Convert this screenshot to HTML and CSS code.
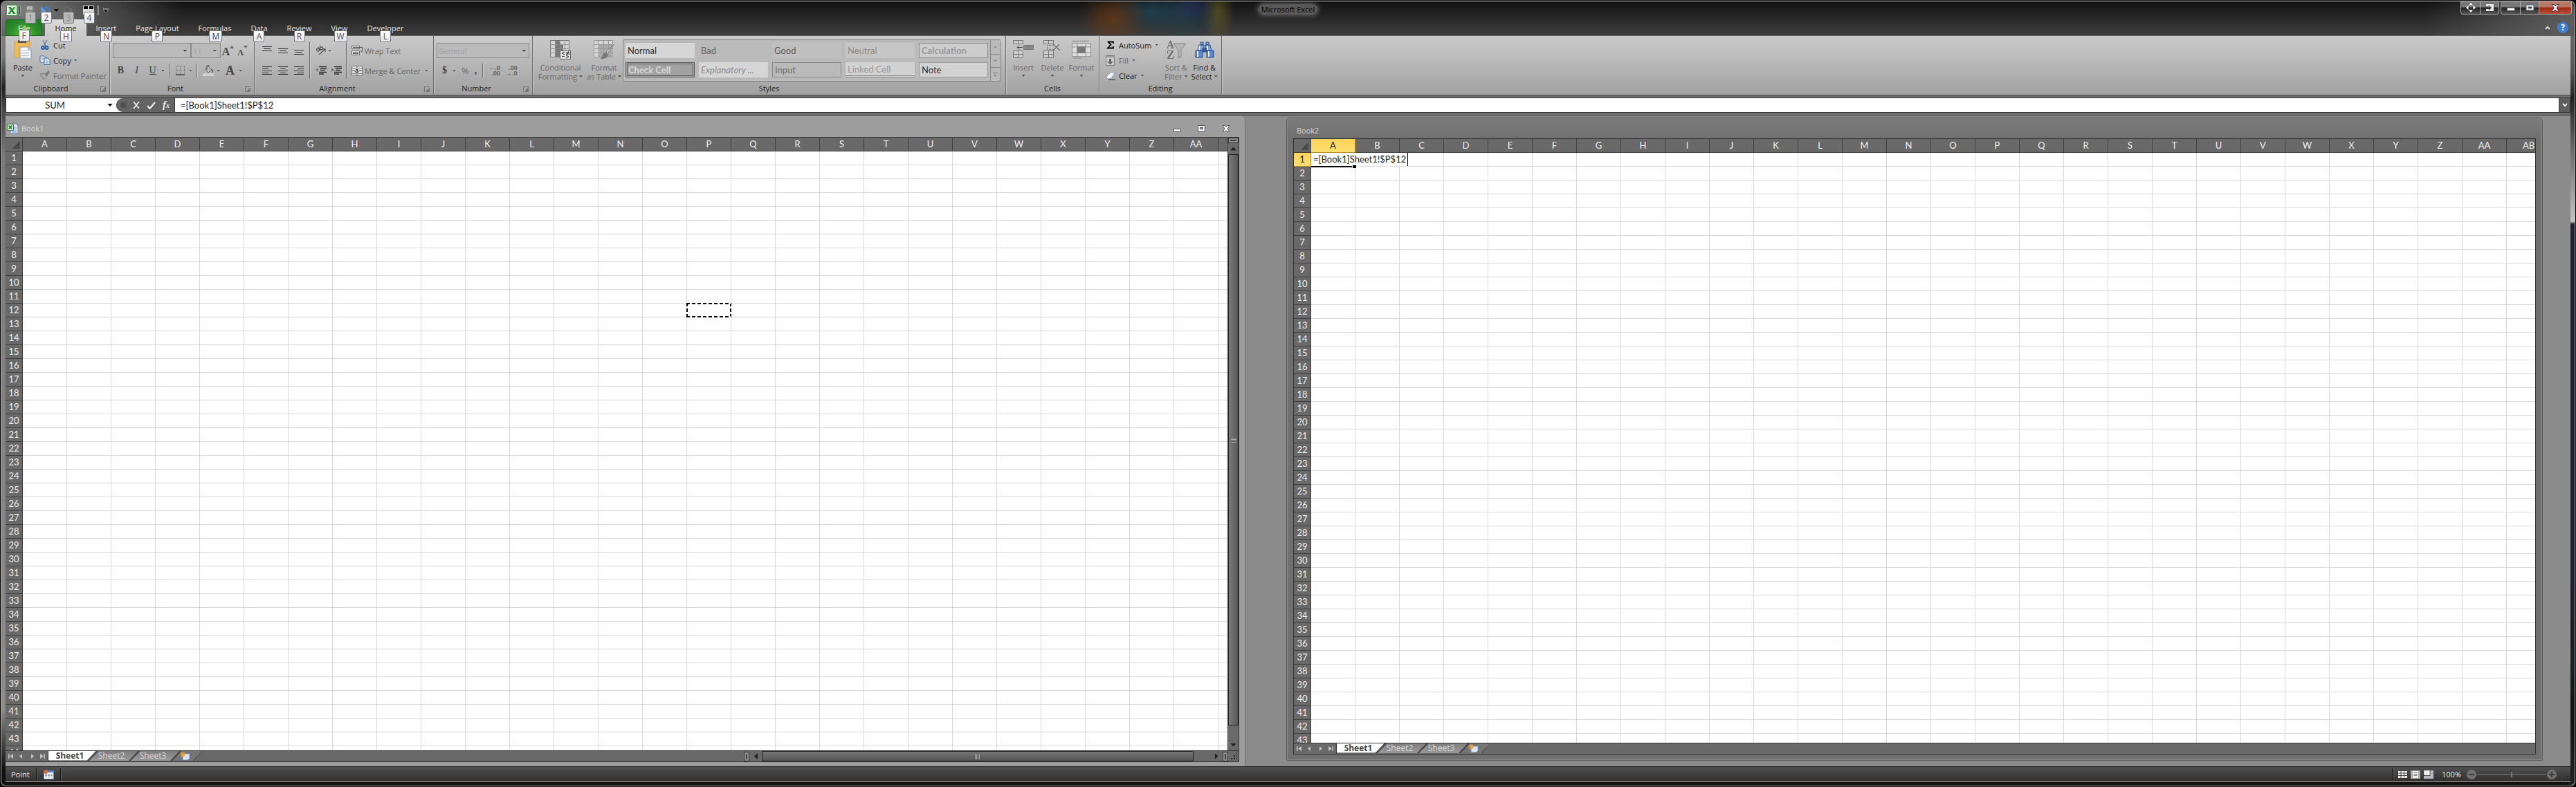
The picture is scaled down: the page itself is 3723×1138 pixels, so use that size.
FILE: index.html
```html
<!DOCTYPE html>
<html lang="en">
<head>
  <meta charset="UTF-8" />
  <meta name="viewport" content="width=device-width, initial-scale=1.0" />
  <title>Microsoft Excel</title>
  <link rel="stylesheet" href="styles.css">
</head>
<body>
  <header class="titlebar">
    <div class="title-row">
      <div class="quick-access">
        <svg class="app-icon" width="16" height="16" viewBox="0 0 16 16"><rect x=".5" y=".5" width="15" height="15" rx="1" fill="#fff" stroke="#3c9a3c"/><rect x="2" y="2" width="12" height="12" fill="#dff0d8"/><path d="M3 3h3.500l2 3.300L11 3h2.500L9.700 8l4 5H10L7.800 9.700 5.500 13H2.500l4-5z" fill="#1f8a2c"/></svg>
        <span class="qat-sep"></span>
        <button class="qat" disabled aria-label="Save"><svg width="14" height="14" viewBox="0 0 14 14"><path d="M1 1h12v12H1z" fill="#808080"/><path d="M3 1h8v5H3z" fill="#b5b5b5"/><path d="M3 8h8v5H3z" fill="#9c9c9c"/></svg><kbd class="off">1</kbd></button>
        <button class="qat" aria-label="Undo"><svg width="14" height="14" viewBox="0 0 14 14"><path d="M3 5c4-4 9-2 9 2 0 3-2 5-4 6" fill="none" stroke="#3d7fd0" stroke-width="2.500"/><path d="M0 1v8h8z" fill="#5b9be6"/></svg><kbd>2</kbd></button>
        <span class="caret black"></span>
        <button class="qat" disabled aria-label="Redo"><svg width="14" height="14" viewBox="0 0 14 14"><path d="M10 6c-2-5-8-4-8 0 0 3 3 5 5 6" fill="none" stroke="#6a6a6a" stroke-width="2"/><path d="M13 3v6H7z" fill="#6a6a6a"/></svg><kbd class="off">3</kbd></button>
        <span class="caret"></span>
        <button class="qat" aria-label="Arrange windows"><svg width="16" height="14" viewBox="0 0 16 14"><path d="M0 0h16v13H0z" fill="#ddd"/><path d="M1 1h6v4H1zM9 1h6v4H9z" fill="#000"/></svg><kbd>4</kbd></button>
        <span class="qat-sep"></span>
        <button class="qat-more" aria-label="Customize Quick Access Toolbar"><svg width="8" height="8" viewBox="0 0 8 8"><path d="M0 0h8v1.500H0zM0 3h8L4 7.500z" fill="#111" stroke="#ccc" stroke-width=".6"/></svg></button>
      </div>
      <h1>Microsoft Excel</h1>
      <div class="window-controls">
        <div class="control-group">
          <button aria-label="Move"><svg width="14" height="14" viewBox="0 0 14 14"><path d="M7 0l3 3.500H4zM7 14l3-3.500H4zM0 7l3.500-3v6zM14 7l-3.500-3v6z" fill="#fff"/></svg></button>
          <button aria-label="Send to monitor"><svg width="12" height="10" viewBox="0 0 12 10"><path d="M1 0h11v10H1V7h4v2l4-4-4-4v2H1z" fill="#e8e8e8"/></svg></button>
        </div>
        <div class="control-group">
          <button aria-label="Minimize"><svg width="12" height="10" viewBox="0 0 12 10"><path d="M.5 5.500h11v4H.5z" fill="#fff" stroke="#555"/></svg></button>
          <button aria-label="Maximize"><svg width="13" height="10" viewBox="0 0 13 10"><path d="M1 1h11v8H1zM4 4v2h5V4z" fill="#f3f3f3" fill-rule="evenodd" stroke="#556"/></svg></button>
          <button class="close" aria-label="Close"><svg width="12" height="11" viewBox="0 0 12 11"><path d="M1 .5h3l2 2.500L8 .5h3l-3.200 5L11 10.500H8L6 8l-2 2.500H1l3.200-5z" fill="#fff" stroke="#534"/></svg></button>
        </div>
      </div>
    </div>
    <nav class="tabs">
      <button class="file">File<kbd>F</kbd></button>
      <button class="active">Home<kbd>H</kbd></button>
      <button>Insert<kbd>N</kbd></button>
      <button>Page Layout<kbd>P</kbd></button>
      <button>Formulas<kbd>M</kbd></button>
      <button>Data<kbd>A</kbd></button>
      <button>Review<kbd>R</kbd></button>
      <button>View<kbd>W</kbd></button>
      <button>Developer<kbd>L</kbd></button>
      <div class="help">
        <button aria-label="Minimize the Ribbon"><svg width="8" height="6" viewBox="0 0 8 6"><path d="M1 5l3-3 3 3" fill="none" stroke="#ddd" stroke-width="2"/></svg></button>
        <button class="help-button" aria-label="Help">?</button>
      </div>
    </nav>
  </header>

  <section class="ribbon">
    <div class="group clipboard">
      <div class="group-body">
        <button class="large paste">
          <svg width="26" height="28" viewBox="0 0 26 28"><rect x="1" y="2" width="22" height="23" rx="1" fill="#eebb58" stroke="#d9a03c"/><path d="M6 0h12v4H6z" fill="#555"/><path d="M8 0h8v2H8z" fill="#ddd"/><path d="M9 10h12l4 4v13H9z" fill="#fafcff" stroke="#7d93b3"/><path d="M21 10v4h4" fill="#dbe6f3" stroke="#7d93b3"/><path d="M11 15h9M11 17.500h11M11 20h11M11 22.500h11M11 25h11" stroke="#b4c2d6"/></svg>
          <span>Paste</span><i class="caret"></i>
        </button>
        <div class="stack">
          <button class="small"><svg width="16" height="14" viewBox="0 0 16 14"><path d="M5 0l4.500 9M11 0L6.500 9" stroke="#6c7f96" stroke-width="1.500"/><g fill="none" stroke="#2462b0" stroke-width="2"><circle cx="5" cy="11" r="2"/><circle cx="10.500" cy="11" r="2"/></g></svg>Cut</button>
          <button class="small"><svg width="16" height="14" viewBox="0 0 16 14"><path d="M1 1h6l2 2v7H1z" fill="#eef4fc" stroke="#3f6fae"/><path d="M2.500 4h4M2.500 6h4" stroke="#5d8ed0"/><path d="M7 4h5l3 3v6.500H7z" fill="#fff" stroke="#2e60a8"/><path d="M8.500 7h3M8.500 9h5M8.500 11h5" stroke="#4f84cb"/></svg>Copy<i class="caret"></i></button>
          <button class="small" disabled><svg width="16" height="14" viewBox="0 0 16 14"><path d="M1 5l6-1 4 4-5 5z" fill="#aaa" stroke="#777"/><path d="M8 5l5-5 2 2-4 6z" fill="#777"/></svg>Format Painter</button>
        </div>
      </div>
      <div class="group-label"><span>Clipboard</span><i class="launcher"></i></div>
    </div>

    <div class="group font">
      <div class="group-body rows">
        <div class="row">
          <select class="font-name" disabled aria-label="Font"><option></option></select><select class="font-size" disabled aria-label="Font size"><option>11</option></select>
          <button class="tool letter grow" disabled aria-label="Grow Font">A<svg width="6" height="4" viewBox="0 0 6 4"><path d="M0 4h6L3 0z" fill="#666"/></svg></button>
          <button class="tool letter shrink" disabled aria-label="Shrink Font">A<svg width="6" height="4" viewBox="0 0 6 4"><path d="M0 0h6L3 4z" fill="#666"/></svg></button>
        </div>
        <div class="row">
          <button class="tool letter" disabled><b>B</b></button>
          <button class="tool letter" disabled><i>I</i></button>
          <button class="tool letter" disabled><u>U</u></button>
          <i class="caret"></i><span class="sep"></span>
          <button class="tool" disabled aria-label="Borders"><svg width="15" height="14" viewBox="0 0 15 14"><path d="M1 .5h13M1 6.500h13M1.500 1v12M7.500 1v12M13.500 1v12" stroke="#777" stroke-dasharray="1 1"/><path d="M1 13h13" stroke="#444" stroke-width="1.500"/></svg></button>
          <i class="caret"></i><span class="sep"></span>
          <button class="tool" disabled aria-label="Fill Color"><svg width="16" height="16" viewBox="0 0 16 16"><path d="M3 6l5-4 5 5-5 4z" fill="#bbb" stroke="#666"/><path d="M6 7V2a1.500 1.500 0 013 0M13 6c2 2 2 3 1 5" fill="none" stroke="#666" stroke-width="1.400"/><path d="M0 12h16v4H0z" fill="#d0d0d0"/></svg></button>
          <i class="caret"></i>
          <button class="tool letter big" disabled>A</button>
          <i class="caret"></i>
        </div>
      </div>
      <div class="group-label"><span>Font</span><i class="launcher"></i></div>
    </div>

    <div class="group alignment">
      <div class="group-body">
        <div class="align-grid">
          <button class="tool" aria-label="Top Align"><svg width="14" height="12" viewBox="0 0 14 12"><path d="M0 .5h14M2 3.500h10M0 6.500h14" stroke="#333"/></svg></button>
          <button class="tool" aria-label="Middle Align"><svg width="14" height="12" viewBox="0 0 14 12"><path d="M0 3.500h14M2 6.500h10M0 9.500h14" stroke="#333"/></svg></button>
          <button class="tool" aria-label="Bottom Align"><svg width="14" height="12" viewBox="0 0 14 12"><path d="M0 5.500h14M2 8.500h10M0 11.500h14" stroke="#333"/></svg></button>
          <button class="tool" aria-label="Align Left"><svg width="14" height="12" viewBox="0 0 14 12"><path d="M0 .5h14M0 3.500h9M0 6.500h14M0 9.500h9M0 11.500h14" stroke="#333"/></svg></button>
          <button class="tool" aria-label="Center"><svg width="14" height="12" viewBox="0 0 14 12"><path d="M0 .5h14M3 3.500h8M0 6.500h14M3 9.500h8M0 11.500h14" stroke="#333"/></svg></button>
          <button class="tool" aria-label="Align Right"><svg width="14" height="12" viewBox="0 0 14 12"><path d="M0 .5h14M5 3.500h9M0 6.500h14M5 9.500h9M0 11.500h14" stroke="#333"/></svg></button>
        </div>
        <span class="sep tall"></span>
        <div class="indent">
          <div class="row"><button class="tool" disabled aria-label="Orientation"><svg width="16" height="14" viewBox="0 0 16 14"><g fill="none" stroke="#555" stroke-width="1.300"><circle cx="3.500" cy="6" r="2"/><path d="M4 2l3 5"/><circle cx="8.500" cy="4" r="2"/><path d="M6 0l1.500 3M5 13l9-8M14 9V5h-4"/></g></svg></button><i class="caret"></i></div>
          <div class="row"><button class="tool" aria-label="Decrease Indent"><svg width="16" height="14" viewBox="0 0 16 14"><path d="M5 1.500h11M7 4h9M7 6.500h7M5 9.500h11M5 12h7" stroke="#333" stroke-width="1.500"/><path d="M0 6l4-3v6z" fill="#777"/></svg></button><button class="tool" aria-label="Increase Indent"><svg width="16" height="14" viewBox="0 0 16 14"><path d="M5 1.500h11M7 4h9M7 6.500h7M5 9.500h11M5 12h7" stroke="#333" stroke-width="1.500"/><path d="M5 6L1 3v6z" fill="#777"/></svg></button></div>
        </div>
        <span class="sep tall"></span>
        <div class="wraps">
          <button class="small" disabled><svg width="16" height="14" viewBox="0 0 16 14"><path d="M.5.500h11v4H.5zM.5 7.500h11v6H.5z" fill="#ddd" stroke="#666"/><path d="M2 2.500h13.500V8M2 9.500h8M2 11.500h8M13 7l2.500 2.500L17 7" fill="none" stroke="#555"/></svg>Wrap Text</button>
          <button class="small" disabled><svg width="16" height="15" viewBox="0 0 16 15"><path d="M.5.500h15v14H.5zM.5 3.500h15M.5 11.500h15M8 .5v3M8 11.500v3" fill="#ddd" stroke="#777"/><path d="M1 7.500h4M11 7.500h4" stroke="#444"/><text x="5" y="10" font-size="9" font-weight="bold" fill="#333">a</text></svg>Merge &amp; Center<i class="caret"></i></button>
        </div>
      </div>
      <div class="group-label"><span>Alignment</span><i class="launcher"></i></div>
    </div>

    <div class="group number">
      <div class="group-body rows">
        <div class="row"><select class="number-format" disabled aria-label="Number format"><option>General</option></select></div>
        <div class="row">
          <button class="tool letter" disabled><b>$</b></button><i class="caret"></i>
          <button class="tool percent" disabled>%</button>
          <button class="tool letter" disabled><b>,</b></button>
          <span class="sep"></span>
          <button class="tool decimal" disabled aria-label="Increase Decimal"><span>←.0</span><span>.00</span></button>
          <button class="tool decimal" disabled aria-label="Decrease Decimal"><span>.00</span><span>→.0</span></button>
        </div>
      </div>
      <div class="group-label"><span>Number</span><i class="launcher"></i></div>
    </div>

    <div class="group styles">
      <div class="group-body">
        <button class="large" disabled>
          <svg width="30" height="28" viewBox="0 0 30 28"><path d="M.5.500h27v24H.5z" fill="#d4d4d4" stroke="#777"/><path d="M7 0h7v24H7zM14 6h5v12h-5z" fill="#777"/><path d="M0 6.500h28M0 12.500h28M0 18.500h28M7.500 0v24M14.500 0v24M21.500 0v24" stroke="#8f8f8f"/><path d="M14.500 15.500h15v12h-15z" fill="#e2e2e2" stroke="#666"/><path d="M21 17l-4 2 4 2M17 23.500h4M23 18h5M23 20h5M27 16l-3 6M23 22l4 2-4 2" fill="none" stroke="#333"/></svg>
          <span>Conditional</span><span>Formatting<i class="caret"></i></span>
        </button>
        <button class="large" disabled>
          <svg width="30" height="28" viewBox="0 0 30 28"><path d="M.5.500h27v24H.5z" fill="#d4d4d4" stroke="#999"/><path d="M7 6h21v18H7z" fill="#aaa"/><path d="M0 6.500h28M0 12.500h28M0 18.500h28M7.500 0v24M14.500 0v24M21.500 0v24" stroke="#999"/><path d="M29 6l-9 13-2-2z" fill="#ddd" stroke="#777"/><path d="M9 27c4-1 3-7 8-9l4 3c-1 5-7 7-12 6z" fill="#777"/></svg>
          <span>Format</span><span>as Table<i class="caret"></i></span>
        </button>
        <div class="gallery">
          <div class="gallery-cells">
            <button class="s-normal">Normal</button>
            <button class="s-bad">Bad</button>
            <button class="s-good">Good</button>
            <button class="s-neutral">Neutral</button>
            <button class="s-calc">Calculation</button>
            <button class="s-check">Check Cell</button>
            <button class="s-expl">Explanatory ...</button>
            <button class="s-input">Input</button>
            <button class="s-linked">Linked Cell</button>
            <button class="s-note">Note</button>
          </div>
          <div class="gallery-scroll">
            <button disabled aria-label="Scroll up"><i class="caret up"></i></button>
            <button disabled aria-label="Scroll down"><i class="caret"></i></button>
            <button class="more" disabled aria-label="More"><i class="caret"></i></button>
          </div>
        </div>
      </div>
      <div class="group-label"><span>Styles</span></div>
    </div>

    <div class="group cells">
      <div class="group-body">
        <button class="large" disabled>
          <svg width="31" height="28" viewBox="0 0 31 28"><g fill="#ccc" stroke="#777"><path d="M.5.500h14v5H.5zM7.500.500v5M.5 15.500h14v10H.5zM.5 20.500h14M7.500 15.500v10"/><path d="M15.500 7.500h14v6h-14z" fill="#888"/><path d="M22.500 7.500v6"/><path d="M14 10.500H6M9 7.500l-3 3 3 3" fill="none" stroke="#444"/></g></svg>
          <span>Insert</span><i class="caret"></i>
        </button>
        <button class="large" disabled>
          <svg width="26" height="28" viewBox="0 0 26 28"><path d="M.5.500h14v5H.5zM7.500.500v5M.5 15.500h14v10H.5zM.5 20.500h14M7.500 15.500v10" fill="#ccc" stroke="#777"/><path d="M6 7.500h10M6 13.500h10M5.500 8v5" stroke="#555" stroke-dasharray="1 1"/><path d="M14 6l10 9M23 6l-9 9" stroke="#777" stroke-width="1.500"/></svg>
          <span>Delete</span><i class="caret"></i>
        </button>
        <button class="large" disabled>
          <svg width="31" height="30" viewBox="0 0 31 30"><path d="M.5 5.500h29v20H.5zM8.500 5v20M21.500 5v20M1 10.500h29M1 19.500h29" fill="#ddd" stroke="#888"/><path d="M8 10h13v10H8z" fill="#777"/><path d="M1 1.500h25" stroke="#555" stroke-dasharray="2 1"/><path d="M2 26h12v2H2z" fill="#ccc" stroke="#888"/></svg>
          <span>Format</span><i class="caret"></i>
        </button>
      </div>
      <div class="group-label"><span>Cells</span></div>
    </div>

    <div class="group editing">
      <div class="group-body">
        <div class="stack">
          <button class="small"><svg width="14" height="12" viewBox="0 0 14 12"><path d="M3 1.500h8V4M3 1l4.500 4.500L3 10.500h8V8" fill="none" stroke="#000" stroke-width="1.800"/></svg>AutoSum<i class="caret"></i></button>
          <button class="small" disabled><svg width="14" height="15" viewBox="0 0 14 15"><path d="M.5.500h12v14H.5z" fill="#ccc" stroke="#777"/><path d="M1 1h12v2H1z" fill="#999"/><path d="M5 5h3v4h3l-4.500 4.500L2 9h3z" fill="#666"/></svg>Fill<i class="caret"></i></button>
          <button class="small"><svg width="14" height="14" viewBox="0 0 14 14"><path d="M1 9l7-7 5 2-6 8H2z" fill="#f5f8fc" stroke="#7f99bd"/><path d="M7 12l6-8v3l-5 6z" fill="#9db8dc"/><path d="M4 13.500h10" stroke="#222"/></svg>Clear<i class="caret"></i></button>
        </div>
        <button class="large" disabled>
          <svg width="30" height="28" viewBox="0 0 30 28"><g fill="none" stroke="#6d6d6d"><path d="M1 11.500h3M8 11.500h4M4 8h5" stroke-width="1"/><path d="M2.500 11L6 2" stroke-width="1"/><path d="M6 1l4 10" stroke-width="2.200"/><path d="M2.500 19v-3.500H10L2.500 26.500H11V23" stroke-width="1"/><path d="M10 16L3 26" stroke-width="2.200"/></g><path d="M11 5h18l-7 9v11h-4V14z" fill="#b5b5b5" stroke="#858585"/></svg>
          <span>Sort &amp;</span><span>Filter<i class="caret"></i></span>
        </button>
        <button class="large">
          <svg width="28" height="26" viewBox="0 0 28 26"><g fill="#7da2d8" stroke="#2b4d88"><path d="M8 2h4v4H8zM16 2h4v4h-4zM6 6h7v8H4zM15 6h7l2 8h-9z"/><path d="M1 14h10v10H1zM17 14h10v10H17z" fill="#5d89cc"/><path d="M11 11h6v5h-6z" fill="#345b9b"/></g><path d="M4 15v8M20 15v8M7 7l-1 6M18 7v6" stroke="#e6f0ff" stroke-width="2"/></svg>
          <span>Find &amp;</span><span>Select<i class="caret"></i></span>
        </button>
      </div>
      <div class="group-label"><span>Editing</span></div>
    </div>
  </section>

  <section class="formula-bar">
    <input class="name-box" value="SUM" aria-label="Name Box">
    <button class="name-drop" aria-label="Names"><i class="caret black"></i></button>
    <div class="formula-tools">
      <i class="knob"></i>
      <button aria-label="Cancel"><svg width="10" height="10" viewBox="0 0 10 10"><path d="M1 0l8 10M9 0L1 10" stroke="#eee" stroke-width="1.800"/></svg></button>
      <button aria-label="Enter"><svg width="13" height="11" viewBox="0 0 13 11"><path d="M1 6l3.500 4L12 1" fill="none" stroke="#eee" stroke-width="2.200"/></svg></button>
      <button class="fx" aria-label="Insert Function">f<small>x</small></button>
    </div>
    <input class="formula" value="=[Book1]Sheet1!$P$12" aria-label="Formula Bar">
    <button class="expand" aria-label="Expand Formula Bar"><svg width="8" height="6" viewBox="0 0 8 6"><path d="M1 1l3 3 3-3" fill="none" stroke="#eee" stroke-width="2"/></svg></button>
  </section>

  <main class="workspace">
    <section class="book book1">
      <div class="book-title">
        <svg width="16" height="16" viewBox="0 0 16 16"><path d="M5 1h8l3 3v11H5z" fill="#e4eefb" stroke="#4a78b8"/><path d="M10 6h4M10 8h4M7 11h7M7 13h7" stroke="#5f92d8"/><path d="M.5 1.500h9v9h-9z" fill="#fff" stroke="#2f8a2f"/><path d="M2.500 3.500l5 5M7.500 3.500l-5 5" stroke="#1f8a2c" stroke-width="1.800"/></svg>
        <span>Book1</span>
        <div class="book-controls">
          <button aria-label="Minimize Book1"><svg width="11" height="10" viewBox="0 0 11 10"><path d="M.5 5.500h10v4H.5z" fill="#fff" stroke="#556"/></svg></button>
          <button aria-label="Maximize Book1"><svg width="11" height="10" viewBox="0 0 11 10"><path d="M.5.500h10v9H.5zM3.500 3.500v2h4v-2z" fill="#eee" fill-rule="evenodd" stroke="#556"/></svg></button>
          <button aria-label="Close Book1"><svg width="12" height="10" viewBox="0 0 12 10"><path d="M1 .5h3l2 2 2-2h3L8 5l3 4.500H8l-2-2-2 2H1L4 5z" fill="#fff" stroke="#556"/></svg></button>
        </div>
      </div>
      <div class="book-frame">
        <div class="sheet-area">
          <div class="sheet"><table id="sheet1"></table></div>
          <div class="vscroll">
            <i class="split"></i>
            <button aria-label="Scroll up"><i class="arrow up"></i></button>
            <div class="thumb"><i class="grip"></i></div>
            <button class="end" aria-label="Scroll down"><i class="arrow down"></i></button>
          </div>
        </div>
        <div class="sheet-bar">
          <div class="sheet-tabs"></div>
          <div class="hscroll">
            <i class="split"></i>
            <button aria-label="Scroll left"><i class="arrow left"></i></button>
            <div class="thumb"><i class="grip"></i></div>
            <button class="end" aria-label="Scroll right"><i class="arrow right"></i></button>
            <i class="split"></i>
            <i class="resize"></i>
          </div>
        </div>
      </div>
    </section>

    <section class="book book2">
      <div class="book-title"><span>Book2</span></div>
      <div class="book-frame">
        <div class="sheet-area">
          <div class="sheet"><table id="sheet2"></table></div>
        </div>
        <div class="sheet-bar">
          <div class="sheet-tabs"></div>
        </div>
      </div>
    </section>
  </main>

  <footer class="status-bar">
    <span class="mode">Point</span>
    <span class="status-sep"></span>
    <button aria-label="Record Macro"><svg width="15" height="14" viewBox="0 0 15 14"><path d="M.5 1.500h14v12H.5z" fill="#fff" stroke="#5a86c4"/><path d="M1 1h14v3H1z" fill="#4b86d8"/><path d="M2 6.500h11M2 8.500h11M2 10.500h11" stroke="#7f93b5" stroke-dasharray="3 1"/><circle cx="3.500" cy="3" r="3" fill="#d46a3c"/></svg></button>
    <span class="status-sep"></span>
    <div class="view-controls">
      <span class="status-sep"></span>
      <button aria-label="Normal view"><svg width="13" height="10" viewBox="0 0 13 10"><path d="M0 0h3.500v2.500H0zM4.500 0H8v2.500H4.500zM9 0h4v2.500H9zM0 3.500h3.500v2.500H0zM4.500 3.500H8v2.500H4.500zM9 3.500h4v2.500H9zM0 7h3.500v3H0zM4.500 7H8v3H4.500zM9 7h4v3H9z" fill="#f2f2f2"/></svg></button>
      <button aria-label="Page layout view"><svg width="14" height="12" viewBox="0 0 14 12"><path d="M0 0h14v12H0z" fill="#aaa"/><path d="M3 1h8v10H3z" fill="#eee"/><path d="M4.500 3.500h5M4.500 5.500h5M4.500 7.500h5" stroke="#777"/></svg></button>
      <button aria-label="Page break preview"><svg width="14" height="12" viewBox="0 0 14 12"><path d="M0 0h14v12H0z" fill="#b5b9be"/><path d="M1 0h3v7H1zM5 0h4v7H5z" fill="#fff"/><path d="M0 7.500h9V0" fill="none" stroke="#444"/></svg></button>
      <span class="zoom-value">100%</span>
      <button class="round" disabled aria-label="Zoom out"><svg width="14" height="14" viewBox="0 0 14 14"><circle cx="7" cy="7" r="7" fill="#707070"/><path d="M3 7h8" stroke="#3c3c3c" stroke-width="2"/></svg></button>
      <input type="range" min="0" max="100" value="50" disabled aria-label="Zoom">
      <button class="round" disabled aria-label="Zoom in"><svg width="14" height="14" viewBox="0 0 14 14"><circle cx="7" cy="7" r="7" fill="#707070"/><path d="M3 7h8M7 3v8" stroke="#3c3c3c" stroke-width="2"/></svg></button>
      <i class="resize"></i>
    </div>
  </footer>

  <script>
    const ROWS = 44;
    const COLS = 28;

    function colName(i) {
      return i < 26 ? String.fromCharCode(65 + i) : 'A' + String.fromCharCode(39 + i);
    }

    function buildSheet(table) {
      let html = '<thead><tr><th class="corner"></th>';
      for (let c = 0; c < COLS; c++) {
        html += `<th>${colName(c)}</th>`;
      }
      html += '</tr></thead><tbody>';
      for (let r = 1; r <= ROWS; r++) {
        html += `<tr><th>${r}</th>` + '<td></td>'.repeat(COLS) + '</tr>';
      }
      table.innerHTML = html + '</tbody>';
    }

    const sheet1 = document.getElementById('sheet1');
    const sheet2 = document.getElementById('sheet2');
    buildSheet(sheet1);
    buildSheet(sheet2);

    // P12 is the referenced cell
    sheet1.rows[12].cells[16].innerHTML = '<div class="ants"></div>';

    // A1 is being edited
    sheet2.rows[0].cells[1].classList.add('selected');
    sheet2.rows[1].cells[0].classList.add('selected');
    sheet2.rows[1].cells[1].innerHTML =
      '<input class="cell-edit" value="=[Book1]Sheet1!$P$12" aria-label="Cell A1"><div class="selection"></div>';

    document.querySelectorAll('.sheet-tabs').forEach(bar => {
      bar.innerHTML = `
        <div class="sheet-nav">
          <button aria-label="First sheet"><svg width="7" height="7" viewBox="0 0 7 7"><path d="M0 0h1.500v7H0zM7 0v7L2 3.500z"/></svg></button>
          <button aria-label="Previous sheet"><svg width="7" height="7" viewBox="0 0 7 7"><path d="M5 0v7L1 3.500z"/></svg></button>
          <button aria-label="Next sheet"><svg width="7" height="7" viewBox="0 0 7 7"><path d="M2 0v7l4-3.500z"/></svg></button>
          <button aria-label="Last sheet"><svg width="7" height="7" viewBox="0 0 7 7"><path d="M5.500 0H7v7H5.500zM0 0v7l5-3.500z"/></svg></button>
        </div>
        <button class="sheet-tab current"><span>Sheet1</span></button>
        <button class="sheet-tab"><span>Sheet2</span></button>
        <button class="sheet-tab"><span>Sheet3</span></button>
        <button class="sheet-tab new" aria-label="Insert Worksheet"><span><svg width="15" height="12" viewBox="0 0 15 12"><path d="M4 3h10v7l-3 2H4z" fill="#dbe7f7" stroke="#7b97c4"/><path d="M4 0v8M0 4h8M1 1l6 6M7 1L1 7" stroke="#f0a030" stroke-width="1.200"/></svg></span></button>`;
    });
  </script>
</body>
</html>
```

FILE: styles.css
```css
* {
  margin: 0;
  padding: 0;
  box-sizing: border-box;
}
html {
  height: 100%;
  background: #000;
}
body {
  height: calc(100% - 2px);
  display: flex;
  flex-direction: column;
  overflow: hidden;
  border-radius: 8px;
  border: 1px solid #b4b4b4;
  border-top-color: #d0d0d0;
  margin: 1px 1px 0;
  font-family: "Open Sans", sans-serif;
  font-size: 11px;
  color: #1e1e1e;
  background:
    linear-gradient(to bottom, #8a8a8a 0, #777 80px, #222 125px, #444 150px, #777 220px, #8f8c8a 90%, #111 98%) left / 8px 100% no-repeat,
    linear-gradient(to bottom, #777 0, #555 100px, #222 140px, #666 210px, #c4c4c4 318px, #20202e 322px, #20202e 75%, #1a1f22 85%, #111 90%, #222 100%) right / 8px 100% no-repeat,
    #141111;
}
button {
  background: none;
  border: none;
  font: inherit;
  color: inherit;
}
input, select {
  font: inherit;
  color: inherit;
  border: none;
  outline: none;
}
svg {
  display: block;
  flex: none;
}
kbd {
  position: absolute;
  display: block;
  min-width: 16px;
  height: 17px;
  padding: 0 3px;
  border: 1px solid #777;
  border-radius: 2px;
  background: linear-gradient(#fff, #e4e4f0);
  color: #4a4a4a;
  font-family: "Open Sans", sans-serif;
  font-size: 12px;
  line-height: 15px;
  text-align: center;
  z-index: 2;
}
kbd.off {
  background: #b9b9b9;
  color: #8a8a8a;
}

.caret {
  display: inline-block;
  flex: none;
  width: 5px;
  height: 3px;
  background: #555;
  clip-path: polygon(0 0, 100% 0, 50% 100%);
}
.caret.up {
  clip-path: polygon(50% 0, 100% 100%, 0 100%);
}
.caret.black {
  width: 7px;
  height: 4px;
  background: #000;
}

/* title bar and tabs */
.titlebar {
  height: 50px;
  flex: none;
  border-bottom: 1px solid #5c5c5c;
  background:
    radial-gradient(ellipse 50px 44px at 1606px 24px, rgba(120, 60, 20, 0.65), transparent),
    radial-gradient(ellipse 60px 30px at 1660px 14px, rgba(30, 80, 100, 0.6), transparent),
    radial-gradient(ellipse 36px 26px at 1722px 8px, rgba(45, 50, 110, 0.5), transparent),
    radial-gradient(ellipse 60px 40px at 1710px 22px, rgba(25, 70, 85, 0.5), transparent),
    radial-gradient(ellipse 24px 46px at 1758px 16px, rgba(115, 100, 25, 0.6), transparent),
    radial-gradient(ellipse 260px 70px at 0 10px, rgba(160, 160, 160, 0.8), transparent),
    radial-gradient(ellipse 220px 80px at 100% 50%, rgba(130, 130, 130, 0.6), transparent),
    linear-gradient(#121212, #3e3e3e);
}
.title-row {
  height: 26px;
  display: grid;
  grid-template-columns: 1fr auto 1fr;
}
.title-row h1 {
  align-self: start;
  padding: 0 4px;
  margin-top: 4px;
  border-radius: 8px;
  font-size: 11px;
  line-height: 15px;
  font-weight: normal;
  color: #000;
  background: rgba(130, 130, 130, 0.6);
  box-shadow: 0 0 6px 2px rgba(130, 130, 130, 0.6);
}
.quick-access {
  display: flex;
  align-items: center;
  gap: 2px;
  padding-left: 7px;
}
.qat {
  position: relative;
  width: 21px;
  display: flex;
  justify-content: center;
}
.qat kbd {
  top: 9px;
  left: 4px;
}
.qat-sep {
  width: 3px;
  height: 14px;
  border: 1px solid #999;
  background: #333;
}
.qat-more {
  padding-left: 4px;
}
.window-controls {
  display: flex;
  justify-content: flex-end;
  align-items: flex-start;
  gap: 2px;
  padding-right: 4px;
}
.control-group {
  display: flex;
  height: 19px;
  border: 1px solid #aaa;
  border-top: none;
  border-radius: 0 0 4px 4px;
  overflow: hidden;
}
.control-group button {
  width: 27px;
  display: flex;
  align-items: center;
  justify-content: center;
  background: linear-gradient(#777 45%, #222 50%, #555);
}
.control-group button + button {
  border-left: 1px solid #aaa;
}
.control-group .close {
  width: 47px;
  background: linear-gradient(#b87868 45%, #9c2812 50%, #b85038);
}
.tabs {
  height: 24px;
  display: flex;
  padding-left: 6px;
  color: #e2e2e2;
}
.tabs > button {
  position: relative;
  height: 24px;
  padding: 0 14px;
}
.tabs > button kbd {
  left: calc(50% - 8px);
  bottom: -9px;
}
.tabs > button.file {
  padding: 0 17px;
  margin-right: 4px;
  color: #fff;
  border: 1px solid #1c6a1c;
  border-radius: 3px 3px 0 0;
  background: radial-gradient(ellipse at 50% 100%, #5cc43c, #2c8a2c 60%, #1f781f);
}
.tabs > button.active {
  color: #1a1a1a;
  border-radius: 3px 3px 0 0;
  background: linear-gradient(#dadada, #c9c9c9);
}
.help {
  display: flex;
  align-items: center;
  gap: 10px;
  margin-left: auto;
  padding-right: 9px;
}
.help-button {
  width: 16px;
  height: 16px;
  border-radius: 50%;
  background: #3e7fd4;
  color: #fff;
  font-weight: bold;
  font-size: 12px;
  line-height: 16px;
}

/* ribbon */
.ribbon {
  flex: none;
  height: 86px;
  margin: 0 6px;
  display: flex;
  background: linear-gradient(#cacaca, #a1a1a1);
  border-bottom: 1px solid #4c4c4c;
}
.group {
  display: flex;
  flex-direction: column;
  border-right: 1px solid #6c6c6c;
  box-shadow: 1px 0 0 #c8c8c8;
}
.clipboard { width: 151px; }
.font { width: 209px; }
.alignment { width: 259px; }
.number { width: 143px; }
.styles { width: 684px; }
.cells { width: 135px; }
.editing { width: 177px; }
.group-body {
  flex: 1;
  display: flex;
  padding: 2px 4px 0;
}
.group-label {
  height: 17px;
  display: flex;
  line-height: 16px;
}
.group-label span {
  flex: 1;
  text-align: center;
}
.launcher {
  width: 8px;
  height: 8px;
  margin: 5px 5px 0 6px;
  border-left: 1px solid #777;
  border-top: 1px solid #777;
  background: linear-gradient(135deg, transparent 50%, #777 50%);
}
.large {
  display: flex;
  flex-direction: column;
  align-items: center;
  padding-top: 4px;
  line-height: 13px;
}
.large svg {
  margin-bottom: 5px;
  height: 28px;
}
.large > .caret {
  margin-top: 4px;
}
.large span .caret {
  margin: 0 0 3px 3px;
}
.ribbon button:disabled {
  color: #686868;
}
.small {
  display: flex;
  align-items: center;
  gap: 4px;
  height: 22px;
  white-space: nowrap;
}
.sep {
  width: 1px;
  height: 20px;
  background: #6a6a6a;
  box-shadow: 1px 0 0 #ccc;
}
.sep.tall {
  height: 54px;
  margin-top: 6px;
}
.tool {
  display: flex;
  align-items: center;
  justify-content: center;
}
.letter {
  font-family: "Liberation Serif", serif;
  font-size: 14px;
}
.ribbon .letter:disabled {
  color: #444;
}
.ribbon select {
  appearance: none;
  height: 22px;
  padding: 0 2px;
  border: 1px solid #8c8c8c;
  opacity: 1;
  color: #a2a2a2;
  background:
    linear-gradient(45deg, transparent 50%, #555 50%) right 7px center / 3px 3px no-repeat,
    linear-gradient(-45deg, transparent 50%, #555 50%) right 4px center / 3px 3px no-repeat,
    #bababa;
}
.rows {
  flex-direction: column;
  padding-top: 10px;
  gap: 7px;
}
.row {
  display: flex;
  align-items: center;
  height: 22px;
}

.paste {
  width: 42px;
}
.clipboard .stack {
  margin-left: 3px;
}

.font-name {
  width: 113px;
}
.font-size {
  width: 43px;
  border-left: none;
}
.font .row:first-child .tool {
  width: 21px;
  height: 22px;
  font-weight: bold;
  font-size: 16px;
  align-items: flex-end;
}
.font .row .shrink.tool {
  font-size: 12px;
}
.tool.letter svg {
  align-self: flex-start;
  margin-top: 4px;
}
.font .row + .row .tool {
  width: 23px;
}
.font .row + .row .caret {
  margin: 0 3px 0 1px;
}
.font .row + .row .sep {
  margin: 0 4px 0 3px;
}
.big {
  font-size: 18px;
  font-weight: bold;
}

.align-grid {
  display: grid;
  grid-template-columns: repeat(3, 23px);
  grid-template-rows: 22px 22px;
  gap: 7px 0;
  padding-top: 8px;
  margin-left: 2px;
}
.alignment .sep {
  margin-left: 4px;
}
.indent {
  display: flex;
  flex-direction: column;
  gap: 7px;
  width: 48px;
  padding: 8px 0 0 8px;
}
.indent .caret {
  margin-left: 2px;
}
.indent .tool + .tool {
  margin-left: 6px;
}
.wraps {
  padding: 8px 0 0 7px;
}
.wraps .small + .small {
  margin-top: 7px;
}
.wraps .caret {
  margin-left: 3px;
}
.wraps .small {
  gap: 3px;
}

.number-format {
  width: 134px;
}
.number .row + .row {
  padding-left: 8px;
  gap: 8px;
}
.percent {
  font-size: 13px;
}
.decimal {
  flex-direction: column;
  font-size: 9px;
  font-weight: bold;
  line-height: 8px;
  align-items: flex-end;
}

.styles .large:first-child {
  width: 72px;
}
.styles .large + .large {
  width: 54px;
}
.gallery {
  height: 61px;
  margin-top: 3px;
  display: flex;
  border: 1px solid #858585;
  border-radius: 2px;
  background: #bababa;
}
.gallery-cells {
  display: grid;
  grid-template-columns: repeat(5, 100px);
  grid-template-rows: 22px 22px;
  gap: 6px;
  padding: 4px 3px;
}
.gallery-cells button {
  padding: 0 3px;
  font-family: Lato, sans-serif;
  font-size: 13px;
  line-height: 20px;
  text-align: left;
  white-space: nowrap;
}
.s-normal { background: #d6d6d6; color: #333; }
.s-bad { color: #666; }
.s-good { background: #c0c0c0; color: #5a5a5a; }
.s-neutral { background: #c6c6c6; color: #8a8a8a; }
.gallery-cells .s-calc { background: #cdcdcd; color: #999; border: 1px solid #8c8c8c; font-weight: bold; }
.gallery-cells .s-check { background: #a2a2a2; color: #d8d8d8; border: 3px double #5a5a5a; font-weight: bold; line-height: 16px; padding: 0 1px; }
.s-expl { background: #d6d6d6; color: #8c8c8c; font-style: italic; }
.s-input { border: 1px solid #8a8a8a; color: #707070; }
.s-linked { background: #d2d2d2; color: #999; border-bottom: 3px double #888; }
.s-note { background: #d2d2d2; color: #333; border: 1px solid #9a9a9a; }
.gallery-scroll {
  display: grid;
  grid-template-rows: 1fr 1fr 1fr;
  width: 14px;
}
.gallery-scroll button {
  display: flex;
  flex-direction: column;
  align-items: center;
  justify-content: center;
  gap: 2px;
  border-left: 1px solid #8a8a8a;
}
.gallery-scroll button + button {
  border-top: 1px solid #8a8a8a;
}
.gallery-scroll .more::before {
  content: "";
  width: 7px;
  height: 1px;
  background: #777;
}
.gallery-scroll .caret {
  background: #888;
}

.cells .large {
  width: 42px;
}
.editing .stack {
  width: 84px;
  margin-left: 5px;
}
.editing .large {
  width: 42px;
}
.editing .small {
  gap: 5px;
}

/* formula bar */
.formula-bar {
  flex: none;
  display: flex;
  height: 29px;
  margin: 0 6px;
  padding: 3px 0;
  background: #707070;
  border-bottom: 1px solid #333;
}
.formula-bar > * {
  border-top: 1px solid #333;
  border-bottom: 1px solid #333;
}
.name-box {
  width: 142px;
  background: #fff;
  text-align: center;
  font-family: Lato, sans-serif;
  font-size: 13px;
  border-left: 1px solid #333;
}
.name-drop {
  width: 18px;
  background: #fff;
  display: flex;
  align-items: center;
  justify-content: center;
}
.formula-tools {
  display: flex;
  align-items: center;
  width: 85px;
  padding-left: 6px;
  gap: 10px;
  background: #fff;
  position: relative;
  isolation: isolate;
}
.formula-tools::before {
  content: "";
  position: absolute;
  inset: 0;
  z-index: -1;
  border-radius: 10px 0 0 10px;
  border-left: 1px solid #333;
  border-right: 1px solid #333;
  background: #646464;
}
.knob {
  width: 8px;
  height: 8px;
  border-radius: 50%;
  background: #4e4e4e;
}
.fx {
  color: #eee;
  font-family: "Liberation Serif", serif;
  font-style: italic;
  font-weight: bold;
  font-size: 15px;
  line-height: 16px;
}
.fx small {
  font-size: 10px;
}
.formula {
  flex: 1;
  padding: 0 8px;
  background: #fff;
  font-family: Lato, sans-serif;
  font-size: 13px;
}
.expand {
  width: 17px;
  display: flex;
  align-items: center;
  justify-content: center;
  border: 1px solid #333;
  background: #5f5f5f;
}

/* workbooks */
.workspace {
  flex: 1;
  min-height: 0;
  margin: 0 6px;
  display: grid;
  grid-template-columns: 1792fr 59fr 1816fr 40fr;
  grid-template-rows: minmax(0, 1fr);
  background: #8b8b8b;
}
.book {
  min-width: 0;
  display: flex;
  flex-direction: column;
}
.book1 {
  grid-column: 1;
  padding: 0 8px 6px 0;
  border-right: 1px solid #777;
  border-radius: 0 6px 0 0;
  background: #9d9d9d;
}
.book2 {
  grid-column: 3;
  margin: 2px 0 8px;
  padding: 0 9px 8px;
  border: 1px solid #5e5e5e;
  border-radius: 6px 6px 0 0;
  box-shadow: inset 0 0 0 1px #868686;
  background: linear-gradient(#7c7c7c, #707070 30px);
}
.book-title {
  flex: none;
  height: 31px;
  display: flex;
  align-items: center;
  gap: 5px;
  padding: 6px 2px 0;
  color: #d6d6d6;
}
.book2 .book-title {
  height: 30px;
  padding: 6px 5px 0;
}
.book-controls {
  display: flex;
  gap: 24px;
  margin-left: auto;
  padding-right: 11px;
}
.book-frame {
  flex: 1;
  min-height: 0;
  display: flex;
  flex-direction: column;
  border: 1px solid #333;
}
.book1 .book-frame {
  border-left: none;
}
.sheet-area {
  flex: 1;
  min-height: 0;
  display: flex;
}
.sheet {
  flex: 1;
  min-width: 0;
  overflow: hidden;
  background: #fff;
}
table {
  table-layout: fixed;
  width: 1817px;
  border-collapse: separate;
  border-spacing: 0;
  font-family: Lato, sans-serif;
  font-size: 13px;
}
th, td {
  position: relative;
  width: 64px;
  height: 20px;
  line-height: 19px;
  border-right: 1px solid #d9d9d9;
  border-bottom: 1px solid #d9d9d9;
}
th {
  font-weight: normal;
  color: #f0f0f0;
  background: #696969;
  border-color: #404040;
}
th:first-child {
  width: 25px;
}
.corner {
  background: linear-gradient(135deg, transparent 50%, #4a4a4a 50%) 9px 4px / 12px 12px no-repeat, #696969;
}
th.selected {
  color: #222;
  background: linear-gradient(#ffd35c, #ffe070);
  border-color: #c08a30;
}
.ants {
  position: absolute;
  inset: -1px;
  background:
    repeating-linear-gradient(90deg, #000 0 5px, #fff 5px 8px) top / 100% 2px no-repeat,
    repeating-linear-gradient(90deg, #000 0 5px, #fff 5px 8px) bottom / 100% 2px no-repeat,
    repeating-linear-gradient(#000 0 5px, #fff 5px 8px) left / 2px 100% no-repeat,
    repeating-linear-gradient(#000 0 5px, #fff 5px 8px) right / 2px 100% no-repeat;
}
.cell-edit {
  position: absolute;
  top: 0;
  left: 0;
  width: 140px;
  height: 19px;
  padding-left: 3px;
  border-right: 1px solid #000;
  background: #fff;
  z-index: 1;
}
.selection {
  position: absolute;
  left: 0;
  right: 2px;
  bottom: -2px;
  height: 2px;
  background: #000;
  z-index: 1;
}
.selection::after {
  content: "";
  position: absolute;
  right: -4px;
  top: -1px;
  width: 5px;
  height: 4px;
  background: #000;
  border-left: 1px solid #fff;
}

/* scroll bars */
.vscroll {
  width: 16px;
  display: flex;
  flex-direction: column;
  align-items: center;
  border-left: 1px solid #444;
  background: #6a6a6a;
}
.split {
  flex: none;
  border: 1px solid #333;
  background: #8e8e8e;
  box-shadow: inset 0 0 0 2px #8e8e8e, inset 0 0 0 3px #444;
}
.vscroll .split {
  width: 15px;
  height: 8px;
}
.vscroll button {
  height: 16px;
  display: flex;
  align-items: center;
}
.vscroll .thumb {
  flex: 1;
  width: 15px;
  margin-bottom: 20px;
  display: flex;
  align-items: center;
  justify-content: center;
  border: 1px solid #222;
  border-radius: 1px;
  background: linear-gradient(90deg, #7a7a7a, #585858);
}
.vscroll .grip {
  width: 8px;
  height: 7px;
  background: repeating-linear-gradient(#aaa 0 1px, #555 1px 2px);
}
.arrow {
  width: 9px;
  height: 5px;
  background: #222;
}
.arrow.up { clip-path: polygon(50% 0, 100% 100%, 0 100%); }
.arrow.down { clip-path: polygon(0 0, 100% 0, 50% 100%); }
.arrow.left { width: 5px; height: 9px; clip-path: polygon(100% 0, 100% 100%, 0 50%); }
.arrow.right { width: 5px; height: 9px; clip-path: polygon(0 0, 100% 50%, 0 100%); }

.sheet-bar {
  flex: none;
  height: 16px;
  display: flex;
  background: #696969;
  box-shadow: inset 0 1px 0 #333;
}
.sheet-tabs {
  flex: 1059;
  min-width: 0;
  display: flex;
}
.sheet-nav {
  width: 62px;
  display: flex;
  align-items: center;
  justify-content: space-around;
  border-right: 1px solid #333;
}
.sheet-nav svg {
  fill: #c4c4c4;
}
.sheet-tab {
  flex: none;
  width: 72px;
  height: 15px;
  margin-left: -12px;
  background: #333;
  color: #d8d8d8;
  font-size: 12px;
  line-height: 15px;
  clip-path: polygon(13px 0, 100% 0, calc(100% - 13px) 100%, 0 100%);
}
.sheet-tab span {
  display: flex;
  justify-content: center;
  height: 14px;
  line-height: 14px;
  margin-top: 1px;
  padding-right: 6px;
  background: linear-gradient(#7e7e7e, #9a9a9a);
  clip-path: polygon(14px 0, calc(100% - 1px) 0, calc(100% - 14px) 100%, 1px 100%);
}
.sheet-tab.current {
  position: relative;
  width: 70px;
  margin-left: 0;
  color: #444;
  font-weight: bold;
  clip-path: polygon(0 0, 100% 0, calc(100% - 13px) 100%, 0 100%);
}
.sheet-tab.current span {
  background: #fff;
  margin-top: 0;
  padding-right: 8px;
  clip-path: polygon(0 0, calc(100% - 1px) 0, calc(100% - 14px) 100%, 0 100%);
}
.sheet-tab.new {
  width: 45px;
}
.sheet-tab.new span {
  align-items: center;
  background: #757575;
}
.hscroll {
  flex: 709;
  display: flex;
  align-items: center;
  padding-top: 1px;
}
.hscroll .split {
  width: 8px;
  height: 14px;
}
.hscroll button {
  width: 18px;
  display: flex;
  justify-content: center;
}
.hscroll .thumb {
  flex: 1;
  height: 15px;
  margin-right: 24px;
  display: flex;
  align-items: center;
  justify-content: center;
  border: 1px solid #222;
  background: linear-gradient(#757575, #555);
}
.hscroll .grip {
  width: 8px;
  height: 8px;
  background: repeating-linear-gradient(90deg, #aaa 0 1px, #555 1px 2px);
}
.resize {
  flex: none;
  width: 11px;
  height: 11px;
  margin: 0 2px;
  background: conic-gradient(#222 25%, transparent 0) 0 0 / 4px 4px;
  clip-path: polygon(100% 0, 100% 100%, 0 100%);
}

/* status bar */
.status-bar {
  flex: none;
  height: 23px;
  margin: 0 6px 5px;
  padding-left: 8px;
  display: flex;
  align-items: center;
  gap: 9px;
  color: #e4e4e4;
  background: linear-gradient(#505050, #303030);
  border-top: 1px solid #222;
  border-bottom: 1px solid #aaa;
}
.status-sep {
  width: 2px;
  height: 18px;
  background: #111;
  border-right: 1px solid #666;
}
.view-controls {
  margin-left: auto;
  display: flex;
  align-items: center;
  gap: 5px;
}
.view-controls .status-sep {
  margin-right: 2px;
}
.zoom-value {
  margin: 0 3px 0 7px;
}
.view-controls .resize {
  margin: 8px 0 0 4px;
}
input[type="range"] {
  appearance: none;
  width: 100px;
  height: 12px;
  margin: 0 -4px;
  background: linear-gradient(#777, #777) center / 100% 1px no-repeat;
}
input[type="range"]::-webkit-slider-thumb {
  appearance: none;
  width: 2px;
  height: 8px;
  background: #777;
}
```
